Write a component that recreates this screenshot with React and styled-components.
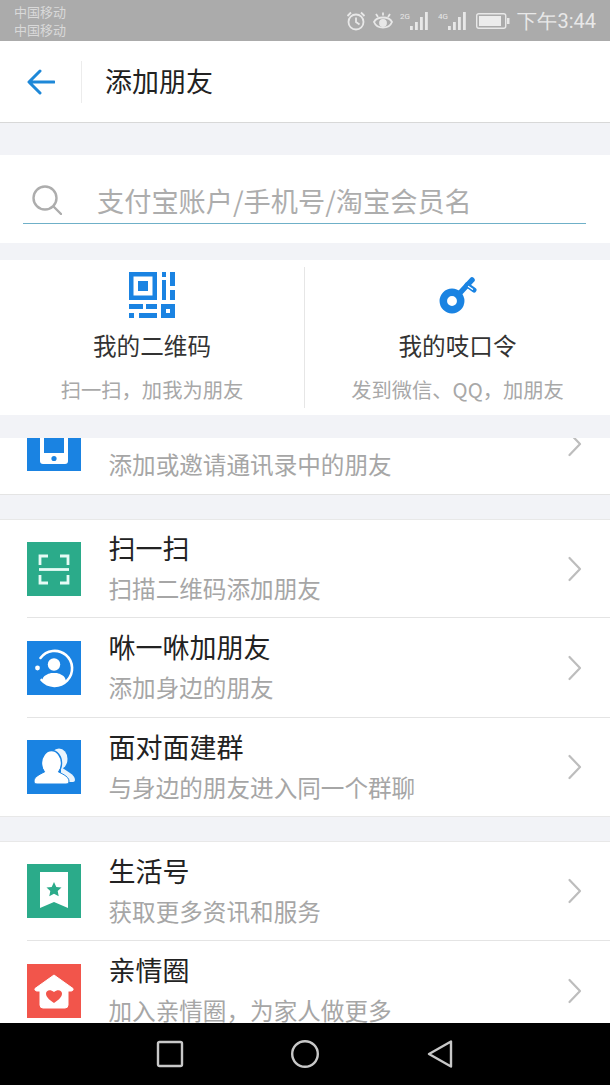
import React from 'react';
import styled, { createGlobalStyle } from 'styled-components';

const Global = createGlobalStyle`
  html, body { margin: 0; padding: 0; background: #f2f3f7; }
  body { font-family: "Noto Sans CJK SC", "Noto Sans", sans-serif; }
`;
const Page = styled.div`
  width: 610px; height: 1085px; display: flex; flex-direction: column; overflow: hidden; background: #f2f3f7;
`;
const StatusBar = styled.div`
  height: 41px; background: #ababab; display: flex; align-items: center; justify-content: space-between;
  padding: 0 14px; color: #e6e6e6; flex: none; box-sizing: border-box;
`;
const Carriers = styled.div`
  font-size: 13px; line-height: 18px; color: #d9d9d9; padding-top: 1px;
`;
const StatusRight = styled.div`display: flex; align-items: center; gap: 7px;`;
const Clock = styled.span`font-family: Roboto, sans-serif; font-size: 20px; line-height: 24px; color: #e8e8e8;`;
const Header = styled.header`
  height: 82px; flex: none; box-sizing: border-box; background: #fff; border-bottom: 1px solid #d8d8d8;
  display: flex; align-items: center;
`;
const BackSlot = styled.div`
  width: 82px; height: 42px; display: flex; align-items: center; padding-left: 27px; box-sizing: border-box;
  border-right: 1px solid #ececec; margin-top: 1px;
`;
const HeaderTitle = styled.h1`
  margin: 0 0 2px 23px; font-size: 27px; line-height: 36px; font-weight: 400; color: #222;
`;
const SearchPanel = styled.section`
  margin-top: 32px; height: 88px; flex: none; background: #fff; padding: 0 24px 0 23px; box-sizing: border-box;
`;
const SearchField = styled.div`
  height: 69px; box-sizing: border-box; border-bottom: 1px solid #6fb0c8; display: flex; align-items: center;
  padding: 21px 0 0 9px; gap: 35px;
`;
const Placeholder = styled.span`
  font-size: 27.2px; line-height: 36px; color: #adadad; white-space: nowrap; margin-top: 0;
`;
const Cards = styled.section`
  margin-top: 17px; height: 155px; flex: none; background: #fff; display: grid; grid-template-columns: 304px 1fr;
  padding: 7px 0; box-sizing: border-box;
`;
const Card = styled.div`
  display: flex; flex-direction: column; align-items: center; padding-top: 5px;
  border-left: ${p => (p.$divided ? '1px solid #e6e6e6' : 'none')};
`;
const CardIcon = styled.div`height: 46px; display: flex; align-items: center; justify-content: center;`;
const CardTitle = styled.div`
  margin-top: 12px; font-size: 23.6px; line-height: 30px; color: #333;
`;
const CardSub = styled.div`
  margin-top: 15px; font-size: 20.3px; line-height: 28px; color: #a8a8a8; white-space: nowrap;
`;
const Clipped = styled.div`
  margin-top: 23px; height: 57px; flex: none; overflow: hidden; display: flex; flex-direction: column; justify-content: flex-end;
  background: #fff; border-bottom: 1px solid #e4e4e4; box-sizing: border-box;
`;
const Section = styled.section`
  margin-top: ${p => p.$top}px; flex: none; background: #fff; border-top: 1px solid #e8e8e8; border-bottom: 1px solid #e8e8e8;
`;
const Row = styled.div`
  margin-left: 27px; height: ${p => p.$h}px; flex: none; box-sizing: border-box; display: flex; align-items: center;
  border-top: ${p => (p.$rule ? '1px solid #e4e4e4' : 'none')}; padding-right: 27px;
`;
const RowText = styled.div`flex: 1; margin-left: 28px; margin-left: 27.5px; margin-bottom: 3px; display: flex; flex-direction: column;`;
const RowTitle = styled.div`
  font-size: 27px; line-height: 36px; height: 36px; color: #222; white-space: nowrap;
`;
const RowSub = styled.div`
  margin-top: 6px; font-size: 23.6px; line-height: 32px; color: #a6a6a6; white-space: nowrap;
`;
const Rest = styled.div`flex: 1; min-height: 0; overflow: hidden;`;
const NavBar = styled.nav`
  height: 62px; flex: none; background: #000; display: flex; align-items: center; justify-content: center; gap: 107px;
  padding-bottom: 1px; box-sizing: border-box;
`;

const Chevron = () => (
  <svg width="16" height="26" viewBox="0 0 16 26" fill="none" stroke="#bdbdbd" strokeWidth="2.2" strokeLinecap="round" strokeLinejoin="round">
    <path d="M2.5 2 L13 13 L2.5 24" />
  </svg>
);
const Tile = ({ bg, children }) => (
  <svg width="54" height="54" viewBox="0 0 54 54" style={{ flex: 'none' }}>
    <rect width="54" height="54" fill={bg} />
    {children}
  </svg>
);
const BLUE = '#1a83e2';
const PhoneTile = () => (
  <Tile bg={BLUE}>
    <path d="M13 0h28v44a3 3 0 0 1-3 3H16a3 3 0 0 1-3-3z" fill="#fff" />
    <rect x="17" y="0" width="20" height="36" fill={BLUE} />
    <circle cx="27" cy="41.5" r="2.6" fill={BLUE} />
  </Tile>
);
const ScanTile = () => (
  <Tile bg="#2bab8a">
    <g fill="none" stroke="#e6fbf5" strokeWidth="2.8">
      <path d="M21 14H13v9M33 14h8v9M21 41H13v-8M33 41h8v-8" />
      <path d="M12 27.5h30" />
    </g>
  </Tile>
);
const RadarTile = () => (
  <Tile bg={BLUE}>
    <path d="M13.5 17 A17.5 17.5 0 1 1 14.5 39" fill="none" stroke="#fff" strokeWidth="2.6" strokeLinecap="round" />
    <circle cx="10.5" cy="27" r="2.4" fill="#fff" />
    <circle cx="27" cy="23.5" r="6.2" fill="#fff" />
    <path d="M15 40c1-6 6-7 9-8h6c3 1 8 2 9 8-3 3-7 4.5-12 4.5S18 43 15 40z" fill="#fff" />
  </Tile>
);
const GroupTile = () => (
  <Tile bg={BLUE}>
    <ellipse cx="32" cy="19" rx="8.500" ry="10.500" fill="#eaf4fd" />
    <path d="M34 27l9 6c3 2 5 4 5 7 0 1-1 2-2 2H34z" fill="#eaf4fd" />
    <ellipse cx="24.500" cy="23" rx="10" ry="12.500" fill="#fff" stroke={BLUE} strokeWidth="1.500" />
    <path d="M19 31c-3 2-12 5-12 10 0 2 1 3 3 3h29c2 0 3-1 3-3 0-5-9-8-12-10z" fill="#fff" stroke={BLUE} strokeWidth="1" />
    <ellipse cx="24.500" cy="24" rx="9" ry="11" fill="#fff" />
  </Tile>
);
const BookmarkTile = () => (
  <Tile bg="#2bab8a">
    <path d="M13 8h28v36l-14-6-14 6z" fill="#fff" />
    <path d="M27 18l2.300 5 5.200.6-3.800 3.500 1 5.200-4.700-2.600-4.700 2.600 1-5.200-3.800-3.500 5.200-.6z" fill="#2bab8a" />
  </Tile>
);
const HomeTile = () => (
  <Tile bg="#f2554b">
    <path d="M27 11L46 24.500c.5 1.500-.5 2.500-2 2.500h-3v14a3 3 0 0 1-3 3H16a3 3 0 0 1-3-3V27h-3c-1.500 0-2.500-1-2-2.500z" fill="#fff" stroke="#fff" strokeLinejoin="round" />
    <path d="M27 39c-5-3.500-8-6-8-9.500 0-3 4-5 8-1.500 4-3.500 8-1.500 8 1.500 0 3.500-3 6-8 9.500z" fill="#f2554b" />
  </Tile>
);
const QrIcon = () => (
  <svg width="46" height="46" viewBox="0 0 46 46" fill={BLUE}>
    <path fillRule="evenodd" d="M0 0h28v28H0zM4.500 4.500v19h19v-19z" />
    <rect x="9" y="9" width="10" height="10" />
    <rect x="33" y="0" width="4" height="5" />
    <rect x="33" y="8" width="4" height="20" />
    <rect x="41" y="0" width="5" height="14" />
    <rect x="41" y="18" width="5" height="10" />
    <rect x="0" y="32" width="14" height="5" />
    <rect x="17" y="32" width="11" height="5" />
    <rect x="0" y="41" width="5" height="5" />
    <rect x="10" y="41" width="18" height="5" />
    <path fillRule="evenodd" d="M32 32h14v14H32zM37 37v4h4v-4z" />
  </svg>
);
const KeyIcon = () => (
  <svg width="40" height="40" viewBox="0 0 40 40" fill="none" stroke={BLUE} strokeLinecap="round">
    <circle cx="14" cy="26" r="8.700" strokeWidth="7.500" />
    <path d="M21 19L34 5" strokeWidth="5.500" />
    <path d="M29 10l7 5" strokeWidth="5" />
    <path d="M30.500 11.500l4 2.800" stroke="#fff" strokeWidth="1.300" />
  </svg>
);
const Alarm = () => (
  <svg width="20" height="20" viewBox="0 0 20 20" fill="none" stroke="#e8e8e8" strokeWidth="1.800">
    <circle cx="10" cy="11" r="7.500" />
    <path d="M10 6.500v4.500l3.500 2.500M1.500 5L5 1.500M18.500 5L15 1.500" />
  </svg>
);
const Eye = () => (
  <svg width="20" height="20" viewBox="0 0 20 20" fill="none" stroke="#e8e8e8" strokeWidth="1.800">
    <path d="M1 11c3-6 15-6 18 0-3 7.500-15 7.500-18 0z" />
    <circle cx="10" cy="12" r="3" fill="#e8e8e8" />
    <path d="M3 3l2 3M17 3l-2 3M10 1.500v3" />
  </svg>
);
const Signal = ({ label }) => (
  <svg width="31" height="20" viewBox="0 0 31 20" fill="#e8e8e8">
    <rect x="10" y="15" width="2.800" height="4" />
    <rect x="15" y="11" width="2.800" height="8" />
    <rect x="20" y="6" width="2.800" height="13" />
    <rect x="25" y="1" width="2.800" height="18" />
    <text x="0" y="8" fontSize="8" fontFamily="Roboto, sans-serif" fill="#e8e8e8">{label}</text>
  </svg>
);
const Battery = () => (
  <svg width="34" height="16" viewBox="0 0 34 16">
    <rect x="0.700" y="0.700" width="29" height="14.600" rx="2" fill="none" stroke="#e8e8e8" strokeWidth="1.400" />
    <rect x="3" y="3" width="22" height="10" fill="#ececec" />
    <rect x="31" y="5" width="2.500" height="6" fill="#e8e8e8" />
  </svg>
);

export default function App() {
  return (
    <Page>
      <Global />
      <StatusBar>
        <Carriers>中国移动<br />中国移动</Carriers>
        <StatusRight>
          <Alarm />
          <Eye />
          <Signal label="2G" />
          <Signal label="4G" />
          <Battery />
          <Clock>下午3:44</Clock>
        </StatusRight>
      </StatusBar>
      <Header>
        <BackSlot>
          <svg width="28" height="28" viewBox="0 0 28 28" fill="none" stroke="#1e88d8" strokeWidth="3" strokeLinecap="round" strokeLinejoin="round">
            <path d="M27 14H3M13 3L2 14l11 11" />
          </svg>
        </BackSlot>
        <HeaderTitle>添加朋友</HeaderTitle>
      </Header>
      <SearchPanel>
        <SearchField>
          <svg width="30" height="30" viewBox="0 0 30 30" fill="none" stroke="#adadad" strokeWidth="2.400" strokeLinecap="round">
            <circle cx="13" cy="13" r="11.500" />
            <path d="M21.500 21.500L29 29" />
          </svg>
          <Placeholder>支付宝账户/手机号/淘宝会员名</Placeholder>
        </SearchField>
      </SearchPanel>
      <Cards>
        <Card>
          <CardIcon><QrIcon /></CardIcon>
          <CardTitle>我的二维码</CardTitle>
          <CardSub>扫一扫，加我为朋友</CardSub>
        </Card>
        <Card $divided>
          <CardIcon><KeyIcon /></CardIcon>
          <CardTitle>我的吱口令</CardTitle>
          <CardSub>发到微信、QQ，加朋友</CardSub>
        </Card>
      </Cards>
      <Clipped>
        <Row $h={100}>
          <PhoneTile />
          <RowText>
            <RowTitle />
            <RowSub>添加或邀请通讯录中的朋友</RowSub>
          </RowText>
          <Chevron />
        </Row>
      </Clipped>
      <Section $top={24}>
        <Row $h={97}>
          <ScanTile />
          <RowText><RowTitle>扫一扫</RowTitle><RowSub>扫描二维码添加朋友</RowSub></RowText>
          <Chevron />
        </Row>
        <Row $rule $h={100}>
          <RadarTile />
          <RowText><RowTitle>咻一咻加朋友</RowTitle><RowSub>添加身边的朋友</RowSub></RowText>
          <Chevron />
        </Row>
        <Row $rule $h={99}>
          <GroupTile />
          <RowText><RowTitle>面对面建群</RowTitle><RowSub>与身边的朋友进入同一个群聊</RowSub></RowText>
          <Chevron />
        </Row>
      </Section>
      <Rest>
        <Section $top={24}>
          <Row $h={98}>
            <BookmarkTile />
            <RowText><RowTitle>生活号</RowTitle><RowSub>获取更多资讯和服务</RowSub></RowText>
            <Chevron />
          </Row>
          <Row $rule $h={100}>
            <HomeTile />
            <RowText><RowTitle>亲情圈</RowTitle><RowSub>加入亲情圈，为家人做更多</RowSub></RowText>
            <Chevron />
          </Row>
        </Section>
      </Rest>
      <NavBar>
        <svg width="28" height="28" viewBox="0 0 28 28" fill="none" stroke="#c8c8c8" strokeWidth="2.400" strokeLinejoin="round">
          <rect x="2" y="2" width="24" height="24" rx="1.500" />
        </svg>
        <svg width="28" height="28" viewBox="0 0 28 28" fill="none" stroke="#c8c8c8" strokeWidth="2.400">
          <circle cx="14" cy="14" r="12.800" />
        </svg>
        <svg width="28" height="28" viewBox="0 0 28 28" fill="none" stroke="#c8c8c8" strokeWidth="2.400" strokeLinejoin="round">
          <path d="M3 14L25 1.500v25z" />
        </svg>
      </NavBar>
    </Page>
  );
}
